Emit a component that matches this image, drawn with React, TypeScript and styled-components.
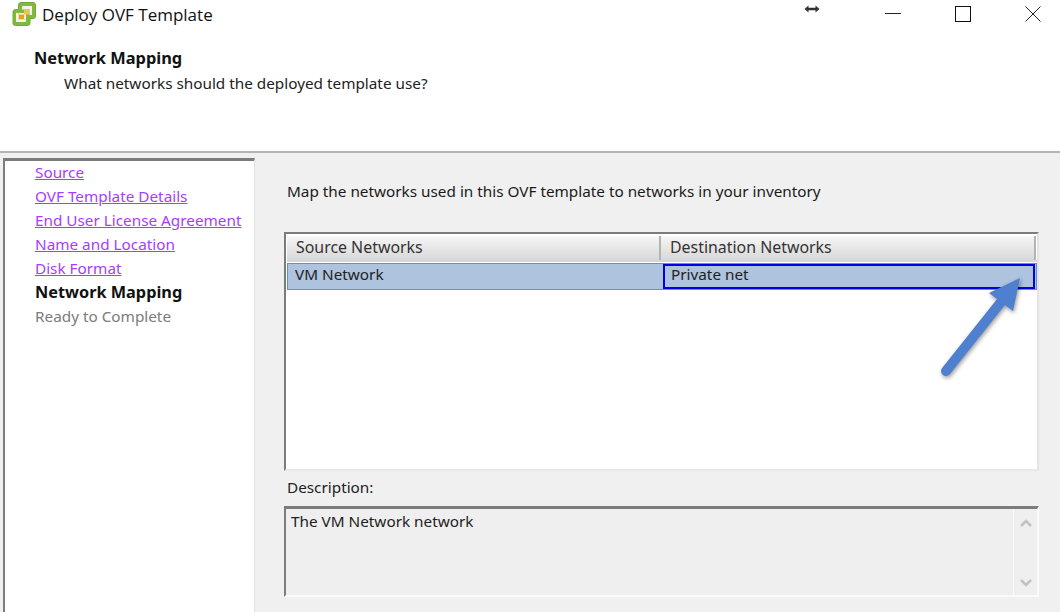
import styled, { createGlobalStyle } from 'styled-components';

const GlobalStyle = createGlobalStyle`
  html, body {
    margin: 0;
    padding: 0;
    background: #f0f0f0;
  }
  * {
    box-sizing: border-box;
  }
`;

const Page = styled.div`
  position: relative;
  display: flex;
  flex-direction: column;
  width: 1060px;
  height: 612px;
  overflow: hidden;
  background: #f0f0f0;
  color: #1a1a1a;
  font-family: 'Noto Sans', 'Liberation Sans', sans-serif;
  font-size: 15.3px;
`;

const TitleBar = styled.div`
  display: flex;
  align-items: flex-start;
  height: 37px;
  padding: 2px 19px 0 12px;
  background: #fff;
`;

const AppTitle = styled.div`
  margin-left: 6px;
  font-family: 'Open Sans', 'Liberation Sans', sans-serif;
  font-size: 17px;
  line-height: 26px;
  color: #111;
`;

const WindowButtons = styled.div`
  display: flex;
  align-items: flex-start;
  gap: 54px;
  margin-left: auto;
  padding-top: 4px;
`;

const ResizeGlyph = styled.svg`
  margin: -2px 11px 0 0;
`;

const WindowButton = styled.button`
  display: flex;
  align-items: center;
  justify-content: center;
  width: 16px;
  height: 16px;
  padding: 0;
  border: 0;
  background: none;
`;

const Header = styled.div`
  display: flex;
  flex-direction: column;
  height: 116px;
  padding: 10px 0 0 34px;
  background: #fff;
  border-bottom: 2px solid #b4b4b4;
`;

const HeaderTitle = styled.div`
  font-weight: 700;
  font-size: 16.4px;
  line-height: 22px;
  color: #111;
`;

const HeaderSub = styled.div`
  margin: 3px 0 0 30px;
  line-height: 22px;
  color: #222;
`;

const Body = styled.div`
  display: flex;
  flex: 1;
  min-height: 0;
  padding: 5px 0 0 3px;
`;

const Sidebar = styled.nav`
  display: flex;
  flex-direction: column;
  width: 252px;
  padding: 0 0 0 30px;
  background: #fff;
  border-top: 3px solid #7c7c7c;
  border-left: 2px solid #7c7c7c;
  border-right: 1px solid #e2e2e2;
`;

const Step = styled.div<{ $state: 'done' | 'current' | 'todo' }>`
  height: 24px;
  line-height: 22px;
  white-space: nowrap;
  color: ${({ $state }) =>
    $state === 'done' ? '#a73cff' : $state === 'current' ? '#111' : '#7b7b7b'};
  font-size: ${({ $state }) => ($state === 'current' ? '16.3px' : '15.3px')};
  font-weight: ${({ $state }) => ($state === 'current' ? 700 : 400)};
  text-decoration: ${({ $state }) => ($state === 'done' ? 'underline' : 'none')};
`;

const Content = styled.div`
  display: flex;
  flex: 1;
  flex-direction: column;
  padding: 22px 21px 0 29px;
`;

const Intro = styled.div`
  margin: 0 0 30px 3px;
  line-height: 22px;
`;

const TableFrame = styled.div`
  display: flex;
  flex-direction: column;
  height: 239px;
  background: #fff;
  border-top: 2px solid #7c7c7c;
  border-left: 2px solid #7c7c7c;
  border-right: 2px solid #e4e4e4;
  border-bottom: 2px solid #e8e8e8;
`;

const TableHead = styled.div`
  display: grid;
  grid-template-columns: 374px 375px;
  height: 26px;
  margin: 2px 0 0 1px;
  border-bottom: 2px solid #d6d6d6;
`;

const HeadCell = styled.div`
  padding-left: 9px;
  font-size: 15.9px;
  line-height: 22px;
  color: #333;
  background: linear-gradient(#f6f6f6, #d8d8d8);
  border-right: 2px solid #b4b4b4;
`;

const TableRow = styled.div`
  display: grid;
  grid-template-columns: 374px 1fr;
  height: 27px;
  margin: 1px 0 0 1px;
  background: #adc3de;
  border: 1px solid #5b95cf;
`;

const RowCell = styled.div`
  padding-left: 7px;
  line-height: 21px;
  color: #222;
`;

const EditCell = styled(RowCell)`
  padding-left: 6px;
  margin: 0 1px 0 1px;
  border: 2px solid #0000e6;
  line-height: 17px;
`;

const DescLabel = styled.div`
  margin: 5px 0 0 3px;
  line-height: 22px;
  color: #222;
`;

const DescBox = styled.div`
  display: flex;
  justify-content: space-between;
  height: 91px;
  margin-top: 8px;
  background: #efefef;
  border-top: 3px solid #7c7c7c;
  border-left: 2px solid #7c7c7c;
  border-right: 2px solid #fafafa;
  border-bottom: 2px solid #fafafa;
`;

const DescText = styled.div`
  padding: 1px 0 0 5px;
  line-height: 22px;
  color: #222;
`;

const ScrollTrack = styled.div`
  display: flex;
  flex-direction: column;
  align-items: center;
  justify-content: space-between;
  width: 24px;
  padding: 10px 0 8px;
  border-left: 1px solid #fafafa;
`;

const ArrowOverlay = styled.svg`
  position: absolute;
  left: 930px;
  top: 270px;
  filter: drop-shadow(1px 2px 2px rgba(0, 0, 0, 0.4));
`;

const steps: { label: string; state: 'done' | 'current' | 'todo' }[] = [
  { label: 'Source', state: 'done' },
  { label: 'OVF Template Details', state: 'done' },
  { label: 'End User License Agreement', state: 'done' },
  { label: 'Name and Location', state: 'done' },
  { label: 'Disk Format', state: 'done' },
  { label: 'Network Mapping', state: 'current' },
  { label: 'Ready to Complete', state: 'todo' },
];

const AppIcon = () => (
  <svg width="24" height="24" viewBox="0 0 24 24">
    <path
      d="M9 0.500h12a2.500 2.500 0 0 1 2.500 2.500v11a2.500 2.500 0 0 1-2.500 2.500h-3v4.500a2.500 2.500 0 0 1-2.500 2.500h-12a2.500 2.500 0 0 1-2.500-2.500v-11a2.500 2.500 0 0 1 2.500-2.500h3v-4.500a2.500 2.500 0 0 1 2.500-2.500z"
      fill="#7fba3c"
      stroke="#74a838"
    />
    <path d="M10 4h10v9h-2.500v-5.500h-7.500z" fill="#f1f3e4" />
    <path d="M4 11h2.500v6.500h7.500v2.500h-10z" fill="#f1f3e4" />
    <path d="M6.500 11h7.500v6.500h-7.500z" fill="#f1f3e4" />
    <path d="M7 12.500h5v4.500h-5z" fill="#eb9f1c" />
    <path d="M12 7.500h5v5h-5z" fill="#f5c445" />
  </svg>
);

const App = () => (
  <Page>
    <GlobalStyle />
    <TitleBar>
      <AppIcon />
      <AppTitle>Deploy OVF Template</AppTitle>
      <WindowButtons>
        <ResizeGlyph width="16" height="10" viewBox="0 0 16 10">
          <path d="M3 5h10" stroke="#333" strokeWidth="2.500" />
          <path d="M0.500 5l4-3.500v7zM15.500 5l-4-3.500v7z" fill="#333" />
        </ResizeGlyph>
        <WindowButton>
          <svg width="16" height="16" viewBox="0 0 16 16">
            <path d="M0 7.500h16" stroke="#222" strokeWidth="1" />
          </svg>
        </WindowButton>
        <WindowButton>
          <svg width="16" height="16" viewBox="0 0 16 16">
            <rect x="0.500" y="0.500" width="15" height="15" fill="none" stroke="#111" />
          </svg>
        </WindowButton>
        <WindowButton>
          <svg width="16" height="16" viewBox="0 0 16 16">
            <path d="M0.500 0.500l15 15M15.500 0.500l-15 15" stroke="#222" />
          </svg>
        </WindowButton>
      </WindowButtons>
    </TitleBar>
    <Header>
      <HeaderTitle>Network Mapping</HeaderTitle>
      <HeaderSub>What networks should the deployed template use?</HeaderSub>
    </Header>
    <Body>
      <Sidebar>
        {steps.map((step) => (
          <Step key={step.label} $state={step.state}>
            {step.label}
          </Step>
        ))}
      </Sidebar>
      <Content>
        <Intro>Map the networks used in this OVF template to networks in your inventory</Intro>
        <TableFrame>
          <TableHead>
            <HeadCell>Source Networks</HeadCell>
            <HeadCell>Destination Networks</HeadCell>
          </TableHead>
          <TableRow>
            <RowCell>VM Network</RowCell>
            <EditCell>Private net</EditCell>
          </TableRow>
        </TableFrame>
        <DescLabel>Description:</DescLabel>
        <DescBox>
          <DescText>The VM Network network</DescText>
          <ScrollTrack>
            <svg width="12" height="8" viewBox="0 0 12 8">
              <path d="M1 7l5-5 5 5" fill="none" stroke="#c2c2c2" strokeWidth="2.500" />
            </svg>
            <svg width="12" height="8" viewBox="0 0 12 8">
              <path d="M1 1l5 5 5-5" fill="none" stroke="#c2c2c2" strokeWidth="2.500" />
            </svg>
          </ScrollTrack>
        </DescBox>
      </Content>
    </Body>
    <ArrowOverlay width="100" height="120" viewBox="0 0 100 120">
      <path d="M16 101L71 32" stroke="#4f7fcf" strokeWidth="10" strokeLinecap="round" />
      <path d="M90 8L59 23 83 41z" fill="#4f7fcf" />
    </ArrowOverlay>
  </Page>
);

export default App;
